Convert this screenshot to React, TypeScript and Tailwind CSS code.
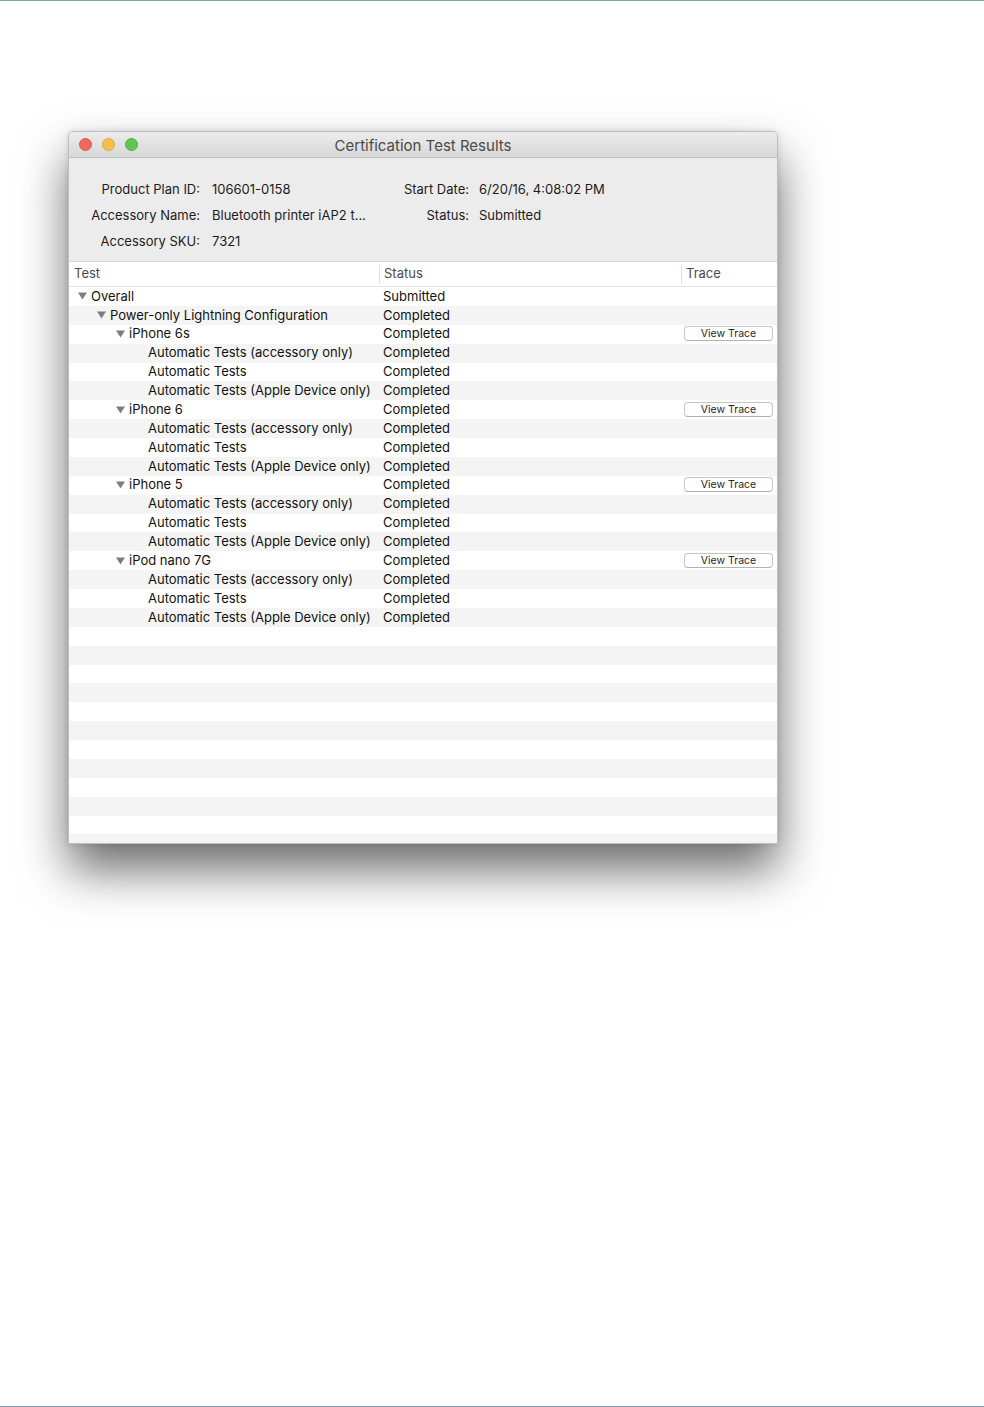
import React from 'react';

type Row = {
  label: string;
  level: number;
  status: string;
  expandable?: boolean;
  trace?: boolean;
};

const rows: Row[] = [
  { label: 'Overall', level: 0, status: 'Submitted', expandable: true },
  { label: 'Power-only Lightning Configuration', level: 1, status: 'Completed', expandable: true },
  { label: 'iPhone 6s', level: 2, status: 'Completed', expandable: true, trace: true },
  { label: 'Automatic Tests (accessory only)', level: 3, status: 'Completed' },
  { label: 'Automatic Tests', level: 3, status: 'Completed' },
  { label: 'Automatic Tests (Apple Device only)', level: 3, status: 'Completed' },
  { label: 'iPhone 6', level: 2, status: 'Completed', expandable: true, trace: true },
  { label: 'Automatic Tests (accessory only)', level: 3, status: 'Completed' },
  { label: 'Automatic Tests', level: 3, status: 'Completed' },
  { label: 'Automatic Tests (Apple Device only)', level: 3, status: 'Completed' },
  { label: 'iPhone 5', level: 2, status: 'Completed', expandable: true, trace: true },
  { label: 'Automatic Tests (accessory only)', level: 3, status: 'Completed' },
  { label: 'Automatic Tests', level: 3, status: 'Completed' },
  { label: 'Automatic Tests (Apple Device only)', level: 3, status: 'Completed' },
  { label: 'iPod nano 7G', level: 2, status: 'Completed', expandable: true, trace: true },
  { label: 'Automatic Tests (accessory only)', level: 3, status: 'Completed' },
  { label: 'Automatic Tests', level: 3, status: 'Completed' },
  { label: 'Automatic Tests (Apple Device only)', level: 3, status: 'Completed' },
];

// empty striped rows that fill the rest of the outline view
const emptyRows = Array.from({ length: 12 });

const font = { fontFamily: 'Inter, "Liberation Sans", sans-serif' };

const Disclosure = () => (
  <svg width="9" height="8" viewBox="0 0 9 8" className="shrink-0">
    <polygon points="0,0.5 9,0.5 4.5,7.5" fill="#7d7d7d" />
  </svg>
);

const InfoRow = ({ l1, v1, l2, v2 }: { l1: string; v1: string; l2?: string; v2?: string }) => (
  <div className="flex h-[26px] items-center text-[13px] text-[#1c1c1c]">
    <div className="w-[131px] text-right">{l1}</div>
    <div className="ml-[12px] w-[170px] whitespace-nowrap">{v1}</div>
    <div className="w-[87px] text-right">{l2}</div>
    <div className="ml-[10px] whitespace-nowrap">{v2}</div>
  </div>
);

export default function App() {
  return (
    <div className="h-[1407px] border-t border-b border-[#7a9fb1] bg-white" style={font}>
      <div className="pt-[130px] pl-[68px]">
        <div className="flex h-[713px] w-[710px] flex-col overflow-hidden rounded-t-[5px] border border-[#bdbdbd] bg-[#ececec] shadow-[0_26px_48px_rgba(0,0,0,0.58),0_0_6px_rgba(0,0,0,0.12)]">
          {/* title bar */}
          <div className="relative flex h-[26px] shrink-0 items-center border-b border-[#c2c2c2] bg-gradient-to-b from-[#ececec] to-[#d8d8d8]">
            <div className="flex items-center gap-[10px] pl-[10px]">
              <span className="h-[13px] w-[13px] rounded-full border border-[#e2554a] bg-[#ee6a5f]" />
              <span className="h-[13px] w-[13px] rounded-full border border-[#e1a73a] bg-[#f5bf4f]" />
              <span className="h-[13px] w-[13px] rounded-full border border-[#55ab3f] bg-[#62c655]" />
            </div>
            <div className="absolute inset-x-0 top-[3px] text-center text-[15px] text-[#4a4a4a]">Certification Test Results</div>
          </div>

          {/* info */}
          <div className="h-[103px] shrink-0 pt-[19px]">
            <InfoRow l1="Product Plan ID:" v1="106601-0158" l2="Start Date:" v2="6/20/16, 4:08:02 PM" />
            <InfoRow l1="Accessory Name:" v1="Bluetooth printer iAP2 t..." l2="Status:" v2="Submitted" />
            <InfoRow l1="Accessory SKU:" v1="7321" />
          </div>

          {/* outline view */}
          <div className="flex-1 overflow-hidden border-t border-[#d6d6d6] bg-white">
            <div className="flex h-[25px] items-center border-b border-[#e3e3e3] text-[13px] text-[#4b4b4b]">
              <div className="w-[310px] pl-[5px]">Test</div>
              <div className="h-[19px] w-px bg-[#e0e0e0]" />
              <div className="w-[301px] pl-[4px]">Status</div>
              <div className="h-[19px] w-px bg-[#e0e0e0]" />
              <div className="pl-[4px]">Trace</div>
            </div>

            {rows.map((r, i) => (
              <div
                key={i}
                className={`flex h-[18.88px] items-center text-[13px] text-[#111] ${i % 2 ? 'bg-[#f4f4f4]' : 'bg-white'}`}
              >
                <div className="flex w-[310px] items-center whitespace-nowrap" style={{ paddingLeft: 9 + r.level * 19 }}>
                  {r.expandable ? <Disclosure /> : <span className="w-[9px] shrink-0" />}
                  <span className="ml-[4px]">{r.label}</span>
                </div>
                <div className="w-[302px] pl-[4px]">{r.status}</div>
                <div className="flex h-full items-start pl-[3px]">
                  {r.trace && (
                    <button className="mt-[1.5px] h-[15px] w-[89px] rounded-[4px] border border-[#c6c6c6] border-b-[#b2b2b2] bg-white text-[10.5px] leading-[13px] text-[#262626]">
                      View Trace
                    </button>
                  )}
                </div>
              </div>
            ))}

            {emptyRows.map((_, i) => (
              <div
                key={`e${i}`}
                className={`h-[18.88px] ${(rows.length + i) % 2 ? 'bg-[#f4f4f4]' : 'bg-white'}`}
              />
            ))}
          </div>
        </div>
      </div>
    </div>
  );
}
